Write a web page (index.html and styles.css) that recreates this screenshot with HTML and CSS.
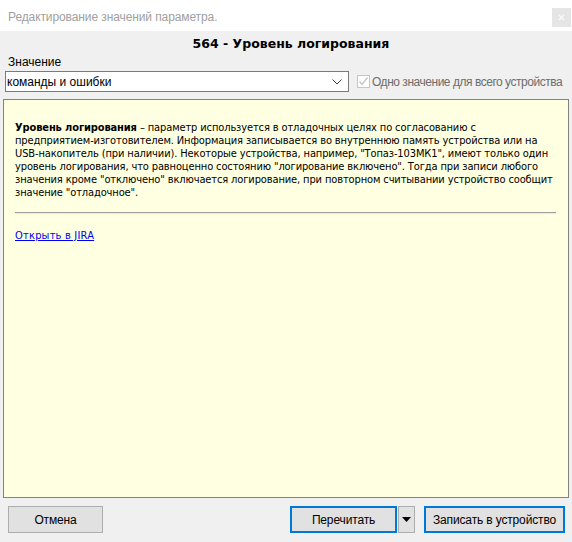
FILE: index.html
```html
<!DOCTYPE html>
<html lang="ru">
<head>
<meta charset="utf-8">
<title>Редактирование значений параметра.</title>
<link rel="stylesheet" href="styles.css">
</head>
<body>
<div class="window">
  <div class="titlebar">
    <span class="title">Редактирование значений параметра.</span>
    <span class="close">
      <svg width="19" height="19" viewBox="0 0 19 19"><path d="M7 7 L12 12 M12 7 L7 12" stroke="#fafafa" stroke-width="1.2" fill="none"/></svg>
    </span>
  </div>
  <div class="main">
    <div class="heading">564 - Уровень логирования</div>
    <div class="label">Значение</div>
    <div class="valuerow">
      <div class="combo">
        <span class="combo-text">команды и ошибки</span>
        <svg class="chev" width="10" height="6" viewBox="0 0 10 6"><path d="M0.5 0.5 L5 5 L9.5 0.5" stroke="#404040" stroke-width="1" fill="none"/></svg>
      </div>
      <div class="check">
        <span class="box">
          <svg width="13" height="13" viewBox="0 0 13 13"><path d="M2.5 6.5 L5 9.5 L10.5 2.5" stroke="#c4c4c4" stroke-width="1.3" fill="none"/></svg>
        </span>
        <span class="check-label">Одно значение для всего устройства</span>
      </div>
    </div>
    <div class="panel">
      <p class="desc"><b>Уровень логирования</b> – параметр используется в отладочных целях по согласованию с<br>предприятием-изготовителем. Информация записывается во внутреннюю память устройства или на<br>USB-накопитель (при наличии). Некоторые устройства, например, "Топаз-103МК1", имеют только один<br>уровень логирования, что равноценно состоянию "логирование включено". Тогда при записи любого<br>значения кроме "отключено" включается логирование, при повторном считывании устройство сообщит<br>значение "отладочное".</p>
      <div class="rule"></div>
      <a class="link" href="#">Открыть в JIRA</a>
    </div>
    <div class="buttons">
      <button class="btn cancel">Отмена</button>
      <div class="right">
        <button class="btn primary reread">Перечитать</button>
        <button class="btn drop"><svg width="9" height="5" viewBox="0 0 9 5"><path d="M0 0 L9 0 L4.5 5 Z" fill="#000"/></svg></button>
        <button class="btn primary write">Записать в устройство</button>
      </div>
    </div>
  </div>
</div>
</body>
</html>
```
FILE: styles.css
```css
html, body {
  margin: 0;
  padding: 0;
}
body {
  width: 572px;
  height: 542px;
  overflow: hidden;
  background: #f0f0f0;
  font-family: "Liberation Sans", Arial, sans-serif;
  font-size: 12px;
}
.window {
  width: 572px;
  height: 542px;
  display: flex;
  flex-direction: column;
}
.titlebar {
  height: 31px;
  background: #ffffff;
  display: flex;
  align-items: flex-start;
  justify-content: space-between;
}
.title {
  margin: 9px 0 0 8px;
  color: #a0a0a0;
  font-size: 12px;
  line-height: 16px;
  letter-spacing: -0.1px;
}
.close {
  margin: 8px 1px 0 0;
  width: 19px;
  height: 19px;
  background: #e5e5e5;
  display: block;
}
.close svg { display: block; }
.main {
  flex: 1;
  display: flex;
  flex-direction: column;
}
.heading {
  margin-top: 5px;
  padding-left: 10px;
  text-align: center;
  font-family: "DejaVu Sans", sans-serif;
  font-weight: bold;
  font-size: 12.5px;
  line-height: 16px;
  color: #000;
}
.label {
  margin: 2px 0 0 8px;
  line-height: 16px;
  color: #000;
}
.valuerow {
  margin-top: 1px;
  display: flex;
  align-items: center;
  height: 21px;
}
.combo {
  margin-left: 5px;
  width: 342px;
  height: 19px;
  border: 1px solid #7a7a7a;
  background: #fff;
  display: flex;
  align-items: center;
  justify-content: space-between;
  flex-shrink: 0;
}
.combo-text {
  padding-left: 1px;
  line-height: 16px;
  color: #000;
}
.chev {
  margin-right: 6px;
  display: block;
}
.check {
  margin-left: 8px;
  display: flex;
  align-items: center;
  flex-shrink: 0;
  white-space: nowrap;
}
.box {
  width: 11px;
  height: 11px;
  border: 1px solid #c6c6c6;
  background: #fff;
  display: block;
  position: relative;
}
.box svg {
  position: absolute;
  left: -1px;
  top: -1px;
}
.check-label {
  margin-left: 2px;
  color: #6d6d6d;
  line-height: 16px;
  letter-spacing: -0.47px;
}
.panel {
  margin: 7px 0 0 3px;
  width: 564px;
  height: 397px;
  border: 1px solid #828282;
  background: #ffffe1;
  box-sizing: content-box;
  padding: 0;
}
.desc {
  margin: 21px 12px 0 11px;
  font-family: "DejaVu Sans Condensed", "DejaVu Sans", sans-serif;
  font-size: 11px;
  line-height: 13px;
  letter-spacing: -0.12px;
  white-space: nowrap;
  color: #000;
}
.rule {
  margin: 13px 12px 0 11px;
  height: 0;
  border-top: 1px solid #a0a0a0;
  border-bottom: 1px solid #e8e8e8;
}
.link {
  display: inline-block;
  margin: 15px 0 0 11px;
  font-family: "DejaVu Sans Condensed", "DejaVu Sans", sans-serif;
  font-size: 11px;
  line-height: 13px;
  letter-spacing: 0.2px;
  color: #0000ee;
  text-decoration: underline;
}
.buttons {
  margin-top: 8px;
  display: flex;
  justify-content: space-between;
  padding: 0 7px 0 8px;
}
.right {
  display: flex;
  gap: 0;
}
.btn {
  height: 27px;
  margin: 0;
  padding: 0;
  background: #e1e1e1;
  border: 1px solid #adadad;
  font-family: "Liberation Sans", Arial, sans-serif;
  font-size: 12px;
  letter-spacing: -0.15px;
  color: #000;
  box-sizing: border-box;
  display: flex;
  align-items: center;
  justify-content: center;
}
.cancel { width: 95px; }
.primary {
  border: 2px solid #0078d7;
}
.reread { width: 107px; }
.drop {
  width: 17px;
  margin-left: 1px;
}
.drop svg { display: block; }
.write {
  width: 141px;
  margin-left: 9px;
}
```
